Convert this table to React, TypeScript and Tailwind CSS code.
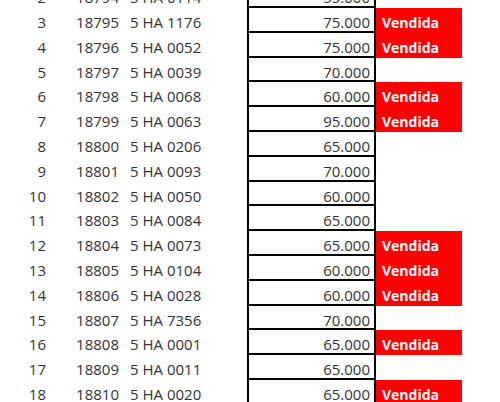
import React from 'react';

const ROWS: [number, string, string, string, boolean][] = [
  [2, '18794', '5 HA 0114', '55.000', false],
  [3, '18795', '5 HA 1176', '75.000', true],
  [4, '18796', '5 HA 0052', '75.000', true],
  [5, '18797', '5 HA 0039', '70.000', false],
  [6, '18798', '5 HA 0068', '60.000', true],
  [7, '18799', '5 HA 0063', '95.000', true],
  [8, '18800', '5 HA 0206', '65.000', false],
  [9, '18801', '5 HA 0093', '70.000', false],
  [10, '18802', '5 HA 0050', '60.000', false],
  [11, '18803', '5 HA 0084', '65.000', false],
  [12, '18804', '5 HA 0073', '65.000', true],
  [13, '18805', '5 HA 0104', '60.000', true],
  [14, '18806', '5 HA 0028', '60.000', true],
  [15, '18807', '5 HA 7356', '70.000', false],
  [16, '18808', '5 HA 0001', '65.000', true],
  [17, '18809', '5 HA 0011', '65.000', false],
  [18, '18810', '5 HA 0020', '65.000', true],
];

export default function App() {
  return (
    <div className="w-[500px] h-[402px] overflow-hidden bg-white text-[#333333] text-[15px] font-['Open_Sans',sans-serif]">
      <div className="flex flex-col mt-[-16.8px]">
        {ROWS.map(([n, code, plate, price, sold]) => (
          <div key={n} className="flex h-[24.8px]">
            <div className="w-[46px] text-right pt-[4px] leading-[21px]">{n}</div>
            <div className="w-[73px] text-right pt-[4px] leading-[21px]">{code}</div>
            <div className="w-[128px] pl-[11px] pt-[4px] leading-[21px]">{plate}</div>
            <div className="w-[129px] h-[24.8px] border-x-2 border-b-2 border-black text-right pr-[4px] pt-[4px] leading-[21px]">
              {price}
            </div>
            {sold ? (
              <div className="w-[86px] bg-[#fe0000] text-white font-bold text-[14px] pl-[6px] pt-[4px] leading-[21px]">
                Vendida
              </div>
            ) : (
              <div className="w-[86px]" />
            )}
          </div>
        ))}
      </div>
    </div>
  );
}
